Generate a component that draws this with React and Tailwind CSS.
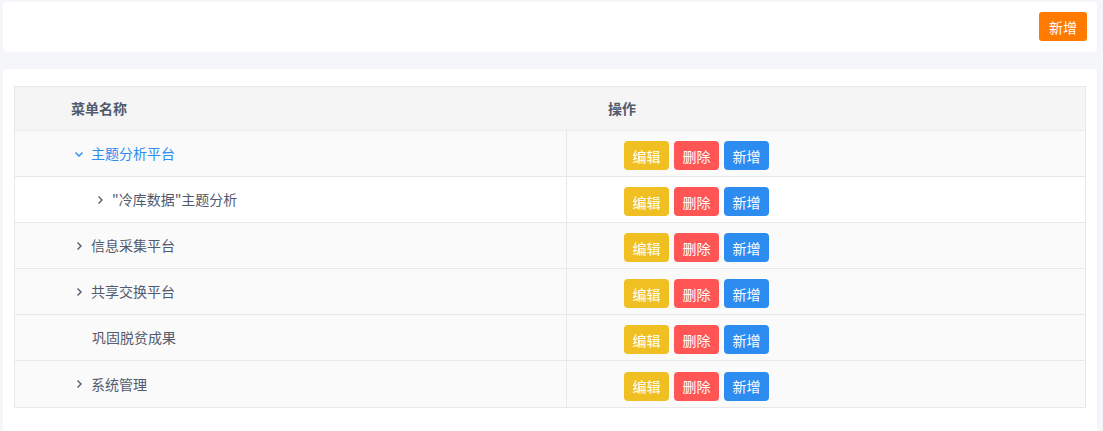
import React from 'react';

const rows = [
  { name: '主题分析平台', level: 0, icon: 'down', active: true, bg: 'bg-[#fafafa]' },
  { name: '"冷库数据"主题分析', level: 1, icon: 'right', bg: 'bg-white' },
  { name: '信息采集平台', level: 0, icon: 'right', bg: 'bg-[#fafafa]' },
  { name: '共享交换平台', level: 0, icon: 'right', bg: 'bg-[#fafafa]' },
  { name: '巩固脱贫成果', level: 0, icon: null, bg: 'bg-[#fafafa]' },
  { name: '系统管理', level: 0, icon: 'right', bg: 'bg-[#fafafa]' },
];

function Chevron({ dir }) {
  return (
    <svg width="16" height="16" viewBox="0 0 16 16" className="shrink-0">
      {dir === 'down' ? (
        <path d="M4.5 6.5 L8 10 L11.5 6.5" fill="none" stroke="currentColor" strokeWidth="1.4" />
      ) : (
        <path d="M6.5 4.5 L10 8 L6.5 11.5" fill="none" stroke="currentColor" strokeWidth="1.4" />
      )}
    </svg>
  );
}

function Btn({ color, children }) {
  return (
    <button
      type="button"
      className={`w-[45px] h-[29px] rounded-[4px] text-white text-[14px] leading-none flex items-center justify-center ${color}`}
    >
      {children}
    </button>
  );
}

export default function App() {
  return (
    <div
      className="min-h-[431px] bg-[#f5f6fa] pl-[3px] pr-[6px] pt-[2px] text-[14px] text-[#515a6e]"
      style={{ fontFamily: '"Noto Sans CJK SC", "Noto Sans", sans-serif' }}
    >
      {/* Toolbar */}
      <div className="h-[50px] bg-white rounded-[4px] flex items-start justify-end pt-[10px] pr-[10px]">
        <button
          type="button"
          className="w-[48px] h-[29px] rounded-[3px] bg-[#ff7a00] text-white text-[14px] leading-none flex items-center justify-center"
        >
          新增
        </button>
      </div>

      {/* Table card */}
      <div className="mt-[17px] bg-white rounded-t-[4px] pt-[17px] px-[11px] pb-[30px]">
        <div className="border border-[#e8e8e8]">
          <div className="flex h-[44px] bg-[#f5f5f5] font-bold items-center border-b border-[#ececec]">
            <div className="w-[552px] pl-[56px]">菜单名称</div>
            <div className="flex-1 pl-[41px]">操作</div>
          </div>
          {rows.map((r, i) => (
            <div
              key={i}
              className={`flex h-[46px] ${r.bg} ${i < rows.length - 1 ? 'border-b border-[#e8e8e8]' : ''}`}
            >
              <div
                className={`w-[552px] border-r border-[#e8e8e8] flex items-center ${r.active ? 'text-[#2d8cf0]' : ''}`}
                style={{ paddingLeft: 56 + r.level * 21 }}
              >
                {r.icon ? (
                  <span className="w-[20px] flex items-center">
                    <Chevron dir={r.icon} />
                  </span>
                ) : (
                  <span className="w-[21px]" />
                )}
                <span>{r.name}</span>
              </div>
              <div className="flex-1 flex items-center gap-[5px] pl-[57px] pt-[4px]">
                <Btn color="bg-[#f0bf22]">编辑</Btn>
                <Btn color="bg-[#ff5555]">删除</Btn>
                <Btn color="bg-[#2d8cf0]">新增</Btn>
              </div>
            </div>
          ))}
        </div>
      </div>
    </div>
  );
}
